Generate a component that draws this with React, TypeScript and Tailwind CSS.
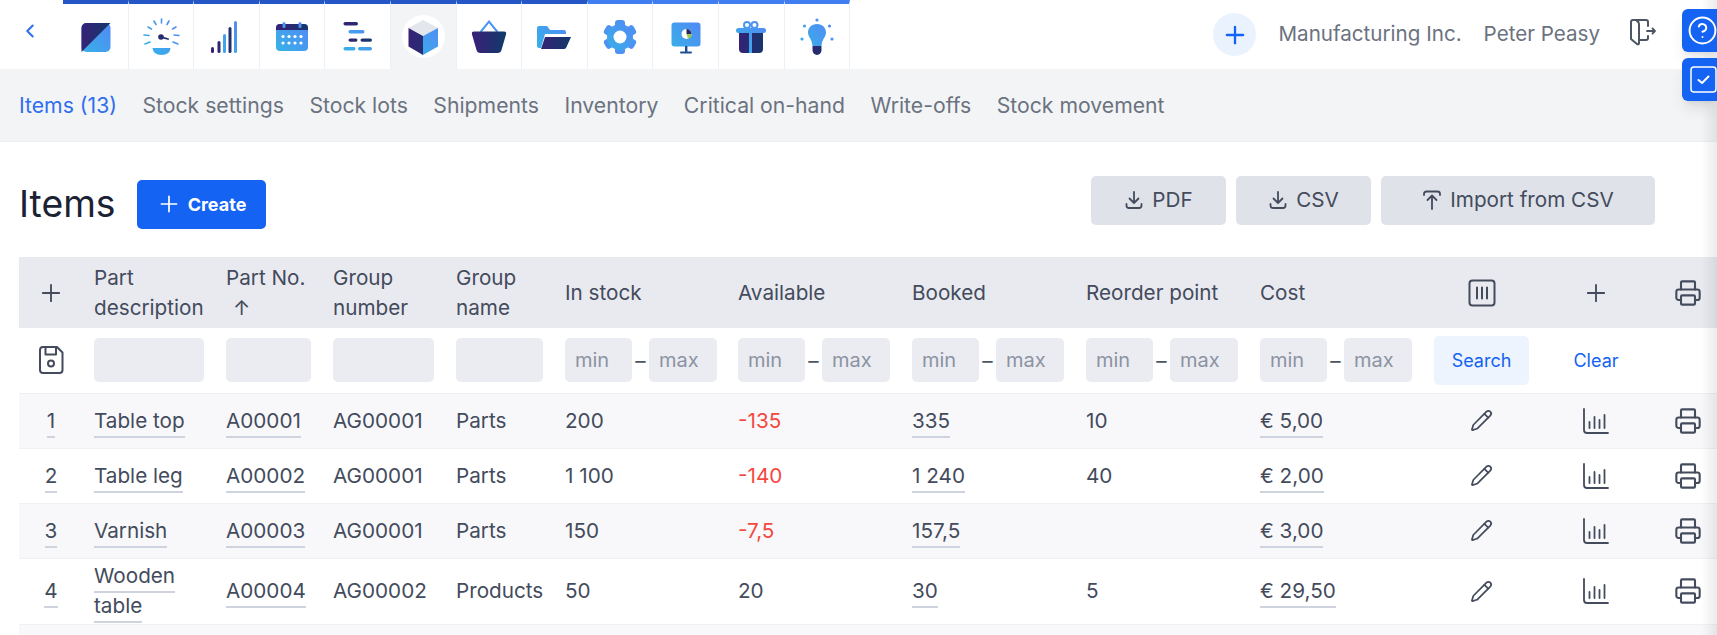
import { ChevronLeft, CircleHelp, Pencil, Plus, Printer } from "lucide-react";
import type { ReactNode } from "react";

type Item = {
  id: number;
  name: string;
  partNo: string;
  groupNo: string;
  groupName: string;
  inStock: string;
  available: string;
  booked: string;
  reorder: string;
  cost: string;
};

const items: Item[] = [
  { id: 1, name: "Table top", partNo: "A00001", groupNo: "AG00001", groupName: "Parts", inStock: "200", available: "-135", booked: "335", reorder: "10", cost: "€ 5,00" },
  { id: 2, name: "Table leg", partNo: "A00002", groupNo: "AG00001", groupName: "Parts", inStock: "1 100", available: "-140", booked: "1 240", reorder: "40", cost: "€ 2,00" },
  { id: 3, name: "Varnish", partNo: "A00003", groupNo: "AG00001", groupName: "Parts", inStock: "150", available: "-7,5", booked: "157,5", reorder: "", cost: "€ 3,00" },
  { id: 4, name: "Wooden table", partNo: "A00004", groupNo: "AG00002", groupName: "Products", inStock: "50", available: "20", booked: "30", reorder: "5", cost: "€ 29,50" },
];

const subTabs = ["Stock settings", "Stock lots", "Shipments", "Inventory", "Critical on-hand", "Write-offs", "Stock movement"];

const LIGHT = "url(#nav-light)";
const DARK = "url(#nav-dark)";

const NavGradients = () => (
  <svg className="absolute h-0 w-0">
    <defs>
      <linearGradient id="nav-light" gradientUnits="userSpaceOnUse" x1="4" y1="36" x2="36" y2="6">
        <stop offset="0" stopColor="#35b4e6" />
        <stop offset="1" stopColor="#5388f6" />
      </linearGradient>
      <linearGradient id="nav-dark" gradientUnits="userSpaceOnUse" x1="4" y1="20" x2="36" y2="20">
        <stop offset="0" stopColor="#3a1f78" />
        <stop offset="1" stopColor="#12396a" />
      </linearGradient>
    </defs>
  </svg>
);

const NavIcon = ({ children }: { children: ReactNode }) => (
  <svg width="40" height="40" viewBox="0 0 40 40" className="relative">
    {children}
  </svg>
);

const rays = [
  [20.5, 2, 20.5, 6], [13, 4, 15, 7.5], [28, 4, 26, 7.5], [7, 10, 10.5, 12], [35, 10, 31.5, 12],
  [3, 18, 8, 18.5], [38, 18.5, 33, 18], [4, 27, 9, 25], [37, 27, 32, 25],
];

const navIcons: ReactNode[] = [
  <>
    <rect x="6.5" y="6" width="29" height="29" rx="5" fill={LIGHT} />
    <path d="M11.5 6H35.5L6.5 35V11A5 5 0 0 1 11.5 6Z" fill={DARK} />
  </>,
  <>
    {rays.map(([x1, y1, x2, y2]) => (
      <line key={`${x1}-${y1}`} x1={x1} y1={y1} x2={x2} y2={y2} stroke={LIGHT} strokeWidth="1.6" strokeLinecap="round" />
    ))}
    <path d="M11.5 31H29.5Q29 38 20.5 38Q12 38 11.5 31Z" fill={LIGHT} />
    <circle cx="20" cy="20" r="2.8" fill={DARK} />
    <path d="M20 19L28 21.5L27.6 23L20 21Z" fill={DARK} />
  </>,
  <>
    <rect x="5" y="30" width="3" height="6" rx="1.5" fill={DARK} />
    <rect x="11.5" y="24" width="3" height="12" rx="1.5" fill={DARK} />
    <rect x="17" y="17" width="3" height="19" rx="1.5" fill={LIGHT} />
    <rect x="22.5" y="10" width="3" height="26" rx="1.5" fill={DARK} />
    <rect x="28" y="4" width="3" height="32" rx="1.5" fill={LIGHT} />
  </>,
  <>
    <rect x="4" y="7" width="32" height="27" rx="4" fill={LIGHT} />
    <path d="M4 13V11A4 4 0 0 1 8 7H32A4 4 0 0 1 36 11V13Z" fill={DARK} />
    <rect x="10.5" y="5" width="3" height="6" rx="1.5" fill={LIGHT} />
    <rect x="26.5" y="5" width="3" height="6" rx="1.5" fill={LIGHT} />
    {[11, 17, 23, 29].map((x) =>
      [19.5, 26].map((y) => <circle key={`${x}-${y}`} cx={x} cy={y} r="1.6" fill="#fff" />),
    )}
  </>,
  <>
    <rect x="5.5" y="5" width="14.5" height="3.4" rx="1.7" fill={DARK} />
    <rect x="10.5" y="13" width="16" height="3.4" rx="1.7" fill={LIGHT} />
    <rect x="10.5" y="21.4" width="9" height="3.4" rx="1.7" fill={DARK} />
    <rect x="22.5" y="21.4" width="11.5" height="3.4" rx="1.7" fill={DARK} />
    <rect x="5.5" y="30" width="12" height="3.4" rx="1.7" fill={LIGHT} />
    <rect x="20" y="30" width="14" height="3.4" rx="1.7" fill={LIGHT} />
  </>,
  <>
    <path d="M20 3L35 11L20 19L5.5 11Z" fill="#e4e6ee" />
    <path d="M5.5 11L20 19V38L5.5 29.5Z" fill={DARK} />
    <path d="M35 11L20 19V38L35 29.5Z" fill={LIGHT} />
  </>,
  <>
    <path d="M11.5 15L20 4.5L28.5 15" fill="none" stroke={LIGHT} strokeWidth="2" />
    <path d="M5 14.5H35Q37.8 14.5 37 17.5L32.5 33Q31.8 36 28.5 36H11.5Q8.2 36 7.5 33L3 17.5Q2.2 14.5 5 14.5Z" fill={DARK} />
  </>,
  <>
    <path d="M3 11Q3 9 5 9H13L16 13H30Q32 13 32 15V17H11L7 31H5Q3 31 3 29Z" fill={LIGHT} />
    <path d="M11 20H37L32.5 30Q32 32 30 32H7Z" fill={DARK} />
  </>,
  <>
    {[0, 60, 120, 180, 240, 300].map((deg) => (
      <rect key={deg} x="15" y="3" width="10" height="8" rx="3" fill={LIGHT} transform={`rotate(${deg} 20 20)`} />
    ))}
    <circle cx="20" cy="20" r="13" fill={LIGHT} />
    <circle cx="20" cy="20" r="6.5" fill="#fff" />
  </>,
  <>
    <rect x="5.5" y="5.5" width="29" height="24" rx="3" fill={LIGHT} />
    <rect x="19" y="29" width="2.4" height="6" fill="#1f4f8f" />
    <rect x="14" y="34.6" width="12" height="2" rx="1" fill="#1f4f8f" />
    <circle cx="20.5" cy="17" r="5" fill="#fff" />
    <path d="M20.5 17V12A5 5 0 0 1 25.5 17Z" fill="#2a2566" />
    <path d="M20.5 17H25.5A5 5 0 0 1 22 21.8Z" fill="#9cc84b" />
  </>,
  <>
    <circle cx="16" cy="8" r="3" fill="none" stroke={LIGHT} strokeWidth="2" />
    <circle cx="23.5" cy="8" r="3" fill="none" stroke={LIGHT} strokeWidth="2" />
    <path d="M8 15H32V32Q32 36 28 36H12Q8 36 8 32Z" fill={DARK} />
    <rect x="5" y="11" width="30" height="5" rx="2.5" fill={LIGHT} />
    <rect x="18" y="15" width="3" height="21" fill={LIGHT} />
  </>,
  <>
    <circle cx="20" cy="3" r="1.6" fill={LIGHT} />
    <circle cx="7.5" cy="9" r="1.6" fill={LIGHT} />
    <circle cx="32.5" cy="9" r="1.6" fill={LIGHT} />
    <circle cx="5" cy="22" r="1.6" fill={LIGHT} />
    <circle cx="35" cy="22" r="1.6" fill={LIGHT} />
    <path d="M20 7C25.5 7 29 11 29 15.5C29 20 25 22 24.5 29H15.5C15 22 11 20 11 15.5C11 11 14.5 7 20 7Z" fill={LIGHT} />
    <path d="M15.5 29H24.5V33A4.5 5 0 0 1 15.5 33Z" fill={DARK} />
  </>,
];

const ExitIcon = () => (
  <svg width="30" height="30" viewBox="0 0 30 30" fill="none" stroke="#4b5563" strokeWidth="2" strokeLinecap="round" strokeLinejoin="round">
    <path d="M20 9V5Q20 3 18 3H5Q3 3 3 5V22L9 27Q11 28 11 26V7Q11 5 9 4" />
    <path d="M11 23H18Q20 23 20 21V19" />
    <path d="M19 14H27M24.5 11.5L27 14L24.5 16.5" strokeWidth="1.8" />
  </svg>
);

const DownloadIcon = () => (
  <svg width="20" height="20" viewBox="0 0 20 20" fill="none" stroke="#434b5c" strokeWidth="1.8" strokeLinecap="round" strokeLinejoin="round">
    <path d="M10 2V13M5.5 8.5L10 13L14.5 8.5" />
    <path d="M2.5 14V15.5Q2.5 18 5 18H15Q17.5 18 17.5 15.5V14" />
  </svg>
);

const UploadIcon = () => (
  <svg width="20" height="22" viewBox="0 0 20 22" fill="none" stroke="#434b5c" strokeWidth="1.8" strokeLinecap="round" strokeLinejoin="round">
    <path d="M10 7V20M5.5 11L10 6.5L14.5 11" />
    <path d="M2 6V5Q2 2.5 4.5 2.5H15.5Q18 2.5 18 5V6" />
  </svg>
);

const SaveIcon = () => (
  <svg width="26" height="30" viewBox="0 0 26 30" fill="none" stroke="#434b5c" strokeWidth="2" strokeLinecap="round" strokeLinejoin="round">
    <path d="M5 2H19L24.5 7.5V25Q24.5 28 21.5 28H5Q2 28 2 25V5Q2 2 5 2Z" />
    <path d="M7.5 2.5V9.5H18V2.5" />
    <circle cx="13" cy="18.5" r="3" />
  </svg>
);

const ColumnsIcon = () => (
  <svg width="28" height="28" viewBox="0 0 28 28" fill="none" stroke="#434b5c" strokeWidth="2" strokeLinecap="round" strokeLinejoin="round">
    <rect x="1.5" y="1.5" width="25" height="25" rx="3" />
    <path d="M9 8.5V19.5M14 8.5V19.5M19 8.5V19.5" />
  </svg>
);

const ChartIcon = () => (
  <svg width="28" height="28" viewBox="0 0 28 28" fill="none" stroke="#434b5c" strokeWidth="1.8" strokeLinecap="round" strokeLinejoin="round">
    <path d="M2 2V23Q2 26 5 26H26" />
    <path d="M7.5 15V21M12.5 10V21M17.5 13V21M22.5 8V21" />
  </svg>
);

const TaskIcon = () => (
  <svg width="27" height="27" viewBox="0 0 27 27" fill="none" stroke="#fff" strokeLinecap="round" strokeLinejoin="round" className="shrink-0">
    <rect x="1" y="1" width="25" height="25" rx="3" strokeWidth="1.5" />
    <path d="M8.5 14L12 17L18.5 10.5" strokeWidth="2" />
  </svg>
);

const Linked = ({ children }: { children: ReactNode }) => (
  <span className="border-b-2 border-[#cfd3dd] pb-[3px] [box-decoration-break:clone]">{children}</span>
);

const RangeFilter = () => (
  <div className="flex items-center">
    <input placeholder="min" className="h-[44px] w-[67px] shrink-0 rounded-[5px] bg-[#ebecf1] px-[10px] text-[20px] outline-none placeholder:text-[#8b93a3]" />
    <span className="w-[17px] shrink-0 text-center text-[#4b5563]">–</span>
    <input placeholder="max" className="h-[44px] w-[68px] shrink-0 rounded-[5px] bg-[#ebecf1] px-[10px] text-[20px] outline-none placeholder:text-[#8b93a3]" />
  </div>
);

const TextFilter = () => <input className="block h-[44px] w-full rounded-[5px] bg-[#ebecf1] outline-none" />;

const ActionRow = () => (
  <>
    <td className="px-[11px] text-center">
      <Pencil size={23} strokeWidth={1.8} className="mx-auto text-[#434b5c]" />
    </td>
    <td className="px-[11px] text-center">
      <div className="flex justify-center">
        <ChartIcon />
      </div>
    </td>
    <td className="pl-[22px]">
      <Printer size={28} strokeWidth={1.8} className="text-[#434b5c]" />
    </td>
  </>
);

export default function App() {
  return (
    <div className="relative h-[635px] overflow-hidden bg-white font-[Inter,sans-serif] text-[20.7px] text-[#434b5c]">
      <NavGradients />

      <div className="flex h-[69px] items-stretch">
        <div className="flex w-[63px] items-center justify-center pr-[4px] pb-[8px] text-[#2f6fed]">
          <ChevronLeft size={22} strokeWidth={2.2} />
        </div>
        {navIcons.map((icon, i) => (
          <div
            key={i}
            className={`flex w-[65.6px] items-center justify-center border-t-4 border-r border-r-[#eff0f4] ${
              i < 8 ? "border-t-[#2457c5]" : "border-t-[#3f7df0]"
            } ${i === 5 ? "bg-[#f3f4f6]" : ""}`}
          >
            {i === 5 ? (
              <div className="flex h-[43px] w-[43px] items-center justify-center rounded-full bg-white">
                <NavIcon>{icon}</NavIcon>
              </div>
            ) : (
              <NavIcon>{icon}</NavIcon>
            )}
          </div>
        ))}
        <div className="ml-auto flex items-center pr-[59px]">
          <button className="flex h-[43px] w-[43px] items-center justify-center rounded-full bg-[#eaf2fe] text-[#1463f3]">
            <Plus size={28} strokeWidth={2} />
          </button>
          <span className="ml-[22px] text-[20.6px] text-[#6b7280]">Manufacturing Inc.</span>
          <span className="ml-[22px] text-[20.6px] text-[#6b7280]">Peter Peasy</span>
          <span className="mb-[6px] ml-[28px]">
            <ExitIcon />
          </span>
        </div>
      </div>

      {/* soft edge of the collapsed side panel */}
      <div className="pointer-events-none absolute inset-y-0 right-0 z-10 w-[16px] bg-gradient-to-l from-[#00000014] to-transparent" />

      <div className="absolute top-[9px] right-0 z-20 flex w-[35px] flex-col gap-[6px]">
        <div className="flex h-[43px] items-center overflow-hidden rounded-l-[6px] bg-[#1463f3] pl-[5px] text-white shadow-lg">
          <CircleHelp size={31} strokeWidth={1.5} className="shrink-0" />
        </div>
        <div className="flex h-[43px] items-center overflow-hidden rounded-l-[6px] bg-[#1463f3] pl-[8px] shadow-lg">
          <TaskIcon />
        </div>
      </div>

      <nav className="flex h-[73px] items-center gap-[25.5px] border-b border-[#eceef2] bg-[#f3f4f6] pl-[19px] pt-[1px] text-[21.2px] text-[#6b7280]">
        <span className="text-[#2f6fed]">Items (13)</span>
        {subTabs.map((tab) => (
          <span key={tab}>{tab}</span>
        ))}
      </nav>

      <div className="flex h-[115px] items-center justify-between pt-[9px] pr-[62px] pl-[19px]">
        <div className="flex items-center gap-[21px]">
          <h1 className="text-[37.3px] leading-none text-[#1a2233]">Items</h1>
          <button className="flex h-[49px] w-[129px] items-center justify-center gap-[6px] rounded-[5px] bg-[#1463f3] text-[18px] font-bold text-white">
            <Plus size={26} strokeWidth={1.6} />
            Create
          </button>
        </div>
        <div className="flex gap-[10px] pb-[8px]">
          <button className="flex h-[49px] w-[135px] items-center justify-center gap-[8px] rounded-[5px] bg-[#dfe2e9]">
            <DownloadIcon />
            PDF
          </button>
          <button className="flex h-[49px] w-[135px] items-center justify-center gap-[8px] rounded-[5px] bg-[#dfe2e9]">
            <DownloadIcon />
            CSV
          </button>
          <button className="flex h-[49px] w-[274px] items-center justify-center gap-[8px] rounded-[5px] bg-[#dfe2e9]">
            <UploadIcon />
            Import from CSV
          </button>
        </div>
      </div>

      <table className="ml-[19px] w-[1698px] table-fixed border-collapse text-left">
        <colgroup>
          <col className="w-[64px]" />
          <col className="w-[132px]" />
          <col className="w-[107px]" />
          <col className="w-[123px]" />
          <col className="w-[109px]" />
          <col className="w-[173px]" />
          <col className="w-[174px]" />
          <col className="w-[174px]" />
          <col className="w-[174px]" />
          <col className="w-[174px]" />
          <col className="w-[117px]" />
          <col className="w-[112px]" />
          <col className="w-[65px]" />
        </colgroup>
        <thead>
          <tr className="h-[71px] bg-[#e9eaf0] leading-[30px] font-normal">
            <th className="px-[11px] font-normal">
              <Plus size={28} strokeWidth={1.6} className="mx-auto" />
            </th>
            <th className="px-[11px] font-normal">Part description</th>
            <th className="px-[11px] font-normal">
              Part No.
              <br />
              <span className="pl-[7px]">↑</span>
            </th>
            <th className="px-[11px] font-normal">Group number</th>
            <th className="px-[11px] font-normal">Group name</th>
            <th className="px-[11px] font-normal">In stock</th>
            <th className="px-[11px] font-normal">Available</th>
            <th className="px-[11px] font-normal">Booked</th>
            <th className="px-[11px] font-normal">Reorder point</th>
            <th className="px-[11px] font-normal">Cost</th>
            <th className="px-[11px] font-normal">
              <div className="flex justify-center">
                <ColumnsIcon />
              </div>
            </th>
            <th className="px-[11px] font-normal">
              <Plus size={28} strokeWidth={1.6} className="mx-auto" />
            </th>
            <th className="pl-[22px] font-normal">
              <Printer size={28} strokeWidth={1.8} />
            </th>
          </tr>
        </thead>
        <tbody>
          <tr className="h-[65px] border-b border-[#eceef2]">
            <td className="px-[11px]">
              <div className="flex justify-center">
                <SaveIcon />
              </div>
            </td>
            <td className="px-[11px]"><TextFilter /></td>
            <td className="px-[11px]"><TextFilter /></td>
            <td className="px-[11px]"><TextFilter /></td>
            <td className="px-[11px]"><TextFilter /></td>
            <td className="px-[11px]"><RangeFilter /></td>
            <td className="px-[11px]"><RangeFilter /></td>
            <td className="px-[11px]"><RangeFilter /></td>
            <td className="px-[11px]"><RangeFilter /></td>
            <td className="px-[11px]"><RangeFilter /></td>
            <td className="px-[11px]">
              <button className="h-[49px] w-full rounded-[5px] bg-[#edf4fe] text-[18px] text-[#1463f3]">Search</button>
            </td>
            <td className="px-[11px] text-center text-[18px] text-[#1463f3]">Clear</td>
            <td />
          </tr>
          {items.map((item) => (
            <tr
              key={item.id}
              className={`border-b border-[#f0f1f4] leading-[30px] ${item.id === 4 ? "h-[66px]" : "h-[55px]"} ${item.id % 2 ? "bg-[#f8f8fb]" : "bg-white"}`}
            >
              <td className="px-[11px] text-center"><Linked>{item.id}</Linked></td>
              <td className="px-[11px]"><Linked>{item.name}</Linked></td>
              <td className="px-[11px]"><Linked>{item.partNo}</Linked></td>
              <td className="px-[11px]">{item.groupNo}</td>
              <td className="px-[11px]">{item.groupName}</td>
              <td className="px-[11px]">{item.inStock}</td>
              <td className={`px-[11px] ${item.available.startsWith("-") ? "text-[#f4483f]" : ""}`}>{item.available}</td>
              <td className="px-[11px]"><Linked>{item.booked}</Linked></td>
              <td className="px-[11px]">{item.reorder}</td>
              <td className="px-[11px]"><Linked>{item.cost}</Linked></td>
              <ActionRow />
            </tr>
          ))}
          <tr className="h-[55px] bg-[#f8f8fb]">
            <td colSpan={13} />
          </tr>
        </tbody>
      </table>
    </div>
  );
}
